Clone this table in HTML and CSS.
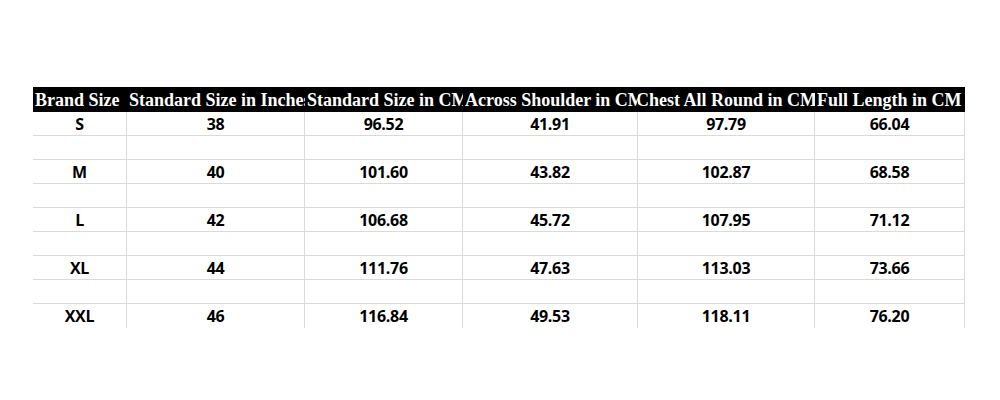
FILE: index.html
```html
<!DOCTYPE html>
<html>
<head>
<meta charset="utf-8">
<link rel="stylesheet" href="styles.css">
</head>
<body>
<div class="sheet">
  <div class="hd">Brand Size</div>
  <div class="hd">Standard Size in Inches</div>
  <div class="hd">Standard Size in CM</div>
  <div class="hd">Across Shoulder in CM</div>
  <div class="hd shift">Chest All Round in CM</div>
  <div class="hd">Full Length in CM</div>

  <div class="c">S</div><div class="c">38</div><div class="c">96.52</div><div class="c">41.91</div><div class="c">97.79</div><div class="c">66.04</div>
  <div class="c"></div><div class="c"></div><div class="c"></div><div class="c"></div><div class="c"></div><div class="c"></div>
  <div class="c">M</div><div class="c">40</div><div class="c">101.60</div><div class="c">43.82</div><div class="c">102.87</div><div class="c">68.58</div>
  <div class="c"></div><div class="c"></div><div class="c"></div><div class="c"></div><div class="c"></div><div class="c"></div>
  <div class="c">L</div><div class="c">42</div><div class="c">106.68</div><div class="c">45.72</div><div class="c">107.95</div><div class="c">71.12</div>
  <div class="c"></div><div class="c"></div><div class="c"></div><div class="c"></div><div class="c"></div><div class="c"></div>
  <div class="c">XL</div><div class="c">44</div><div class="c">111.76</div><div class="c">47.63</div><div class="c">113.03</div><div class="c">73.66</div>
  <div class="c"></div><div class="c"></div><div class="c"></div><div class="c"></div><div class="c"></div><div class="c"></div>
  <div class="c last">XXL</div><div class="c last">46</div><div class="c last">116.84</div><div class="c last">49.53</div><div class="c last">118.11</div><div class="c last">76.20</div>
</div>
</body>
</html>
```

FILE: styles.css
```css
html, body {
  margin: 0;
  padding: 0;
  background: #ffffff;
}

.sheet {
  display: grid;
  grid-template-columns: 94px 178px 158px 175px 177px 150px;
  margin: 87px 0 0 33px;
  width: 932px;
}

.hd {
  height: 25px;
  line-height: 26px;
  background: #000000;
  color: #ffffff;
  font-family: "Liberation Serif", "Times New Roman", serif;
  font-weight: 700;
  font-size: 18px;
  white-space: nowrap;
  overflow: hidden;
  padding-left: 2px;
  box-sizing: border-box;
}

.hd.shift {
  text-indent: -4px;
}

.c {
  box-sizing: border-box;
  height: 24px;
  line-height: 24px;
  border-right: 1px solid #dadada;
  border-bottom: 1px solid #dadada;
  text-align: center;
  font-family: "Open Sans", "Liberation Sans", sans-serif;
  font-weight: 700;
  font-size: 16px;
  letter-spacing: -0.3px;
  color: #000000;
}

.c.last {
  border-bottom: none;
}
```
